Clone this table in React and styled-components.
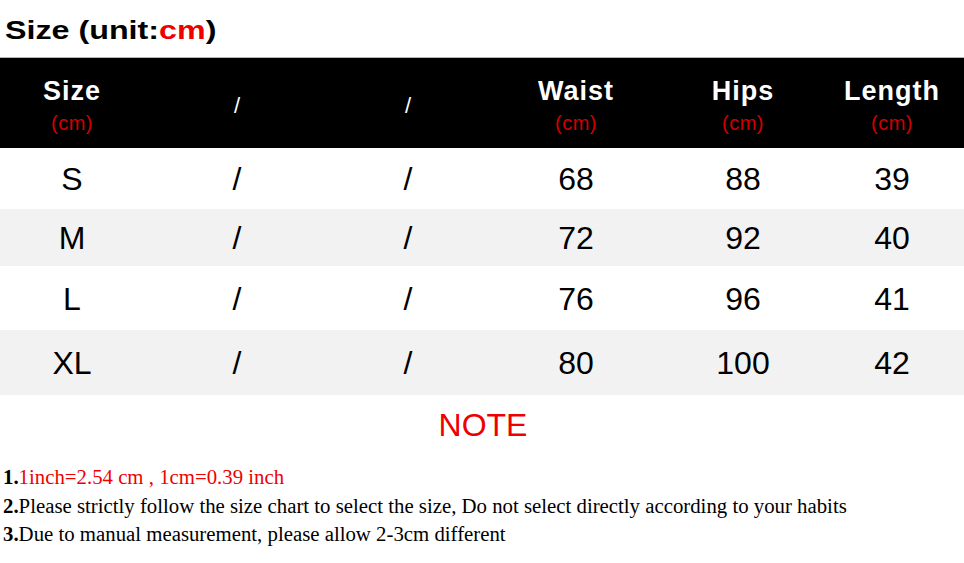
import React from "react";
import styled, { createGlobalStyle } from "styled-components";

const GlobalStyle = createGlobalStyle`
  body {
    margin: 0;
    background: #ffffff;
  }
`;

const Page = styled.div`
  width: 964px;
  height: 563px;
  overflow: hidden;
  font-family: "Liberation Sans", Arial, sans-serif;
  color: #000000;
`;

const Title = styled.h1`
  margin: 0;
  padding: 15px 0 0 5px;
  box-sizing: border-box;
  height: 57px;
  font-size: 26px;
  font-weight: 700;
  line-height: 30px;
`;

const TitleText = styled.span`
  display: inline-block;
  transform: scaleX(1.24);
  transform-origin: left center;
`;

const Red = styled.span`
  color: #ee0000;
`;

const cols = "144px 186px 156px 180px 154px 144px";

const HeaderRow = styled.div`
  display: grid;
  grid-template-columns: ${cols};
  height: 90px;
  background: #000000;
  border-top: 1px solid #b5b5b5;
`;

const HeadCell = styled.div`
  display: flex;
  flex-direction: column;
  align-items: center;
  padding-top: 18px;
  color: #ffffff;
`;

const HeadLabel = styled.span`
  font-size: 27px;
  font-weight: 700;
  letter-spacing: 1px;
  line-height: 30px;
`;

const HeadSlash = styled.span`
  margin-top: 17px;
  font-size: 22px;
  line-height: 26px;
`;

const Unit = styled.span`
  margin-top: 5px;
  color: #d00000;
  font-size: 20px;
  letter-spacing: 0.5px;
  line-height: 24px;
`;

const Row = styled.div`
  display: grid;
  grid-template-columns: ${cols};
  height: ${(p) => p.$h}px;
  background: ${(p) => (p.$shaded ? "#f2f2f2" : "#ffffff")};
`;

const Cell = styled.div`
  display: flex;
  align-items: center;
  justify-content: center;
  padding-top: 2px;
  font-size: 32px;
`;

const NoteTitle = styled.div`
  text-align: center;
  color: #ee0000;
  font-size: 32px;
  padding: 12px 0 0 2px;
  height: 52px;
  line-height: 36px;
`;

const Notes = styled.div`
  padding: 4px 0 0 3px;
  font-family: "Liberation Serif", "Times New Roman", serif;
  font-size: 20.8px;
`;

const NoteLine = styled.p`
  margin: 0;
  line-height: 28.5px;
  color: ${(p) => p.$color || "#000000"};
`;

const Num = styled.b`
  color: #000000;
`;

const headers = [
  { label: "Size", unit: true },
  { label: "/" },
  { label: "/" },
  { label: "Waist", unit: true },
  { label: "Hips", unit: true },
  { label: "Length", unit: true },
];

const rows = [
  { h: 61, cells: ["S", "/", "/", "68", "88", "39"] },
  { h: 57, cells: ["M", "/", "/", "72", "92", "40"] },
  { h: 64, cells: ["L", "/", "/", "76", "96", "41"] },
  { h: 65, cells: ["XL", "/", "/", "80", "100", "42"] },
];

export default function App() {
  return (
    <Page>
      <GlobalStyle />
      <Title>
        <TitleText>
          Size (unit:<Red>cm</Red>)
        </TitleText>
      </Title>
      <HeaderRow>
        {headers.map((h, i) => (
          <HeadCell key={i}>
            {h.unit ? (
              <>
                <HeadLabel>{h.label}</HeadLabel>
                <Unit>(cm)</Unit>
              </>
            ) : (
              <HeadSlash>{h.label}</HeadSlash>
            )}
          </HeadCell>
        ))}
      </HeaderRow>
      {rows.map((r, i) => (
        <Row key={i} $h={r.h} $shaded={i % 2 === 1}>
          {r.cells.map((c, j) => (
            <Cell key={j}>{c}</Cell>
          ))}
        </Row>
      ))}
      <NoteTitle>NOTE</NoteTitle>
      <Notes>
        <NoteLine $color="#ee0000">
          <Num>1.</Num>1inch=2.54 cm , 1cm=0.39 inch
        </NoteLine>
        <NoteLine>
          <Num>2.</Num>Please strictly follow the size chart to select the size, Do not select directly according to your habits
        </NoteLine>
        <NoteLine>
          <Num>3.</Num>Due to manual measurement, please allow 2-3cm different
        </NoteLine>
      </Notes>
    </Page>
  );
}
